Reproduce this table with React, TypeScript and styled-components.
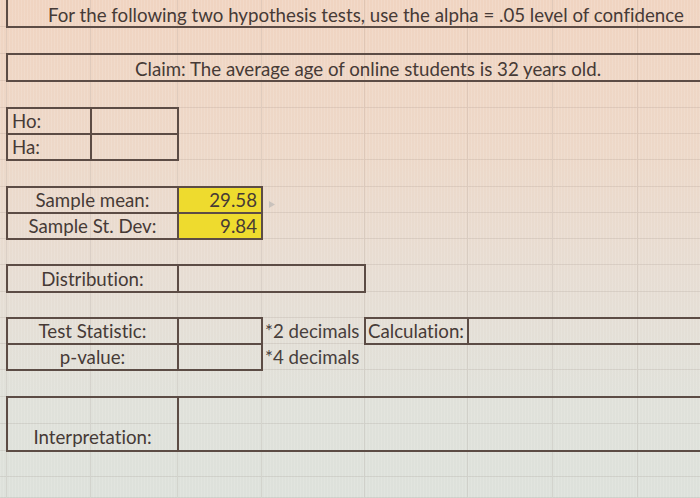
import React from "react";
import styled, { createGlobalStyle } from "styled-components";

const GlobalStyle = createGlobalStyle`
    html, body {
        margin: 0;
        padding: 0;
        overflow: hidden;
        background: #e6dcd2;
    }
`;

const COLS = [7, 84, 87, 84, 103, 103, 85, 85, 85];
const ROWS = [27, 27, 27, 27, 26, 26, 27, 26, 26, 26, 27, 26, 26, 26, 27, 27, 27, 26, 21];

const Sheet = styled.div`
    display: grid;
    grid-template-columns: ${COLS.map((c) => c + "px").join(" ")};
    grid-template-rows: ${ROWS.map((r) => r + "px").join(" ")};
    width: 723px;
    height: 498px;
    font-family: Lato, "Open Sans", sans-serif;
    font-size: 18.7px;
    font-variant-ligatures: none;
    color: #463a36;
    background:
        repeating-linear-gradient(90deg, rgba(255, 255, 255, 0.12) 0 1px, transparent 1px 3px),
        linear-gradient(180deg, #f0d4c1 0%, #edd8c8 30%, #e7ddd3 55%, #e0e1da 80%, #dde1db 100%);
`;

const GridLine = styled.div<{ $r: number; $c: number }>`
    grid-row: ${(p) => p.$r};
    grid-column: ${(p) => p.$c};
    border-right: 1px solid rgba(110, 90, 80, 0.12);
    border-bottom: 1px solid rgba(110, 90, 80, 0.12);
`;

const Cell = styled.div<{
    $area: string;
    $align?: "left" | "center" | "right";
    $fill?: string;
    $valign?: "center" | "flex-end";
    $padTop?: number;
}>`
    grid-area: ${(p) => p.$area};
    display: flex;
    align-items: ${(p) => p.$valign || "center"};
    justify-content: ${(p) =>
        p.$align === "right" ? "flex-end" : p.$align === "center" ? "center" : "flex-start"};
    margin: -1px;
    padding: ${(p) => p.$padTop || 0}px 4px 0 4px;
    border: 2px solid #5c4c45;
    background: ${(p) => p.$fill || "transparent"};
    white-space: nowrap;
    line-height: 22px;
    z-index: 1;
`;

const TitleCell = styled(Cell)`
    border-top: none;
    border-right: none;
    padding-left: 40px;
`;

const OpenCell = styled(Cell)`
    border-right: none;
`;

const Note = styled.div<{ $area: string }>`
    grid-area: ${(p) => p.$area};
    display: flex;
    align-items: center;
    padding-left: 3px;
    white-space: nowrap;
    line-height: 22px;
    color: #48403c;
    z-index: 1;
`;

const Pointer = styled.div`
    grid-area: 8 / 5 / 9 / 6;
    padding: 4px 0 0 6px;
    z-index: 1;
`;

export default function App() {
    const lines: React.ReactNode[] = [];
    ROWS.forEach((_, r) =>
        COLS.forEach((__, c) => lines.push(<GridLine key={`${r}-${c}`} $r={r + 1} $c={c + 1} />))
    );

    return (
        <>
            <GlobalStyle />
            <Sheet>
                {lines}

                <TitleCell $area="1 / 2 / 2 / 10" $padTop={5}>
                    For the following two hypothesis tests, use the alpha = .05 level of confidence
                </TitleCell>

                <OpenCell $area="3 / 2 / 4 / 10" $padTop={3} style={{ paddingLeft: 127 }}>
                    Claim: The average age of online students is 32 years old.
                </OpenCell>

                <Cell $area="5 / 2 / 6 / 3">Ho:</Cell>
                <Cell $area="5 / 3 / 6 / 4" />
                <Cell $area="6 / 2 / 7 / 3">Ha:</Cell>
                <Cell $area="6 / 3 / 7 / 4" />

                <Cell $area="8 / 2 / 9 / 4" $align="center">Sample mean:</Cell>
                <Cell $area="8 / 4 / 9 / 5" $align="right" $fill="#eedb2e">29.58</Cell>
                <Cell $area="9 / 2 / 10 / 4" $align="center">Sample St. Dev:</Cell>
                <Cell $area="9 / 4 / 10 / 5" $align="right" $fill="#eedb2e">9.84</Cell>
                <Pointer>
                    <svg width="8" height="9" viewBox="0 0 8 9">
                        <path d="M1 1 L7 4.5 L1 8 Z" fill="#c9c2bc" />
                    </svg>
                </Pointer>

                <Cell $area="11 / 2 / 12 / 4" $align="center">Distribution:</Cell>
                <Cell $area="11 / 4 / 12 / 6" />

                <Cell $area="13 / 2 / 14 / 4" $align="center">Test Statistic:</Cell>
                <Cell $area="13 / 4 / 14 / 5" />
                <Note $area="13 / 5 / 14 / 6">*2 decimals</Note>
                <Cell $area="13 / 6 / 14 / 7" style={{ paddingLeft: 2 }}>Calculation:</Cell>
                <OpenCell $area="13 / 7 / 14 / 10" />
                <Cell $area="14 / 2 / 15 / 4" $align="center">p-value:</Cell>
                <Cell $area="14 / 4 / 15 / 5" />
                <Note $area="14 / 5 / 15 / 6">*4 decimals</Note>

                <Cell $area="16 / 2 / 18 / 4" $align="center" $valign="flex-end" style={{ paddingBottom: 2 }}>
                    Interpretation:
                </Cell>
                <OpenCell $area="16 / 4 / 18 / 10" />
            </Sheet>
        </>
    );
}
